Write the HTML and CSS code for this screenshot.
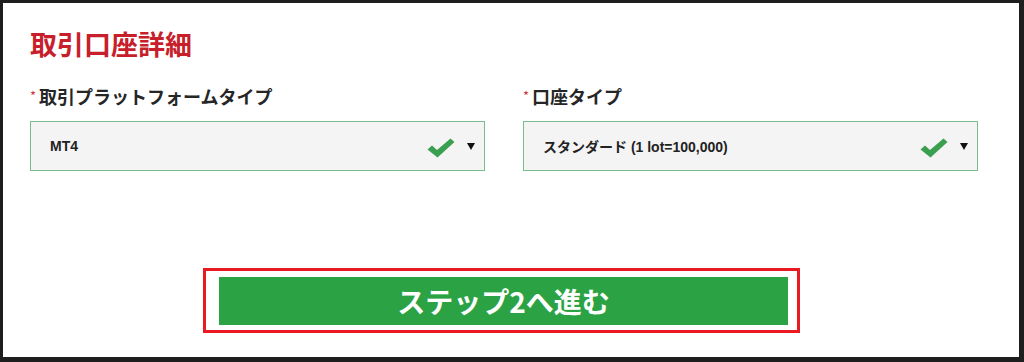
FILE: index.html
```html
<!DOCTYPE html>
<html lang="ja">
<head>
<meta charset="utf-8">
<title>取引口座詳細</title>
<link rel="stylesheet" href="styles.css">
</head>
<body>
<div class="frame">
  <h2 class="title">取引口座詳細</h2>
  <div class="fields">
    <div class="field">
      <div class="label"><span class="req">*</span>取引プラットフォームタイプ</div>
      <div class="select">
        <span class="value">MT4</span>
        <svg class="check" viewBox="0 0 28 20" width="28" height="20"><path d="M0.5 11.5 L5 7.5 L10 12 L23.5 0.5 L27.5 4 L10.5 19.5 Z" fill="#3a9f4e"/></svg>
        <span class="arrow"></span>
      </div>
    </div>
    <div class="field">
      <div class="label"><span class="req">*</span>口座タイプ</div>
      <div class="select">
        <span class="value">スタンダード (1 lot=100,000)</span>
        <svg class="check" viewBox="0 0 28 20" width="28" height="20"><path d="M0.5 11.5 L5 7.5 L10 12 L23.5 0.5 L27.5 4 L10.5 19.5 Z" fill="#3a9f4e"/></svg>
        <span class="arrow"></span>
      </div>
    </div>
  </div>
  <div class="highlight">
    <button class="next" type="button">ステップ2へ進む</button>
  </div>
</div>
</body>
</html>
```

FILE: styles.css
```css
html, body {
  margin: 0;
  padding: 0;
  background: #1e1e1e;
}

.frame {
  box-sizing: border-box;
  width: 1024px;
  height: 362px;
  background: #ffffff;
  border-style: solid;
  border-color: #1e1e1e;
  border-width: 3px 5px 5px 3px;
  padding: 23px 0 0 27px;
  font-family: "Noto Sans CJK JP", "Liberation Sans", sans-serif;
}

.title {
  margin: 0;
  font-size: 27px;
  line-height: 36px;
  font-weight: bold;
  color: #c71f2b;
}

.fields {
  display: flex;
  gap: 38px;
  margin-top: 21px;
}

.field {
  width: 455px;
}

.label {
  font-size: 18px;
  line-height: 26px;
  font-weight: 600;
  color: #262626;
  margin-bottom: 12px;
}

.req {
  color: #d0383e;
  font-size: 13px;
  font-weight: normal;
  margin-right: 3px;
  vertical-align: 3px;
}

.select {
  box-sizing: border-box;
  height: 50px;
  border: 1px solid #78bb8c;
  background: #f4f4f4;
  display: flex;
  align-items: center;
  padding: 0 9px 0 19px;
}

.value {
  flex: 1;
  font-family: "Liberation Sans", "Noto Sans CJK JP", sans-serif;
  font-size: 14px;
  font-weight: bold;
  color: #222;
}

.check {
  margin-right: 12px;
  margin-top: 3px;
}

.arrow {
  width: 0;
  height: 0;
  border-left: 4px solid transparent;
  border-right: 4px solid transparent;
  border-top: 7px solid #111;
}

.highlight {
  box-sizing: border-box;
  width: 597px;
  margin: 97px 0 0 173px;
  border: 3px solid #ea1a22;
  padding: 6px 9px 5px 13px;
}

.next {
  display: block;
  width: 569px;
  height: 48px;
  border: none;
  background: #2ba345;
  color: #ffffff;
  font-family: "Noto Sans CJK JP", "Liberation Sans", sans-serif;
  font-size: 28px;
  font-weight: bold;
  line-height: 48px;
  padding: 0;
  text-align: center;
}
```
